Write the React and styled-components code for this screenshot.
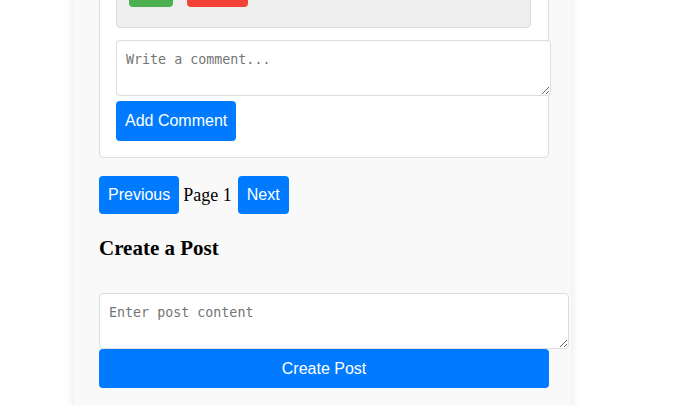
import React from 'react'
import styled, { createGlobalStyle } from 'styled-components'

const GlobalStyle = createGlobalStyle`
    body {
        margin: 0;
        background: #fff;
        font-family: "Liberation Serif", "Times New Roman", serif;
        overflow: hidden;
    }
`

function App() {
    return (
        <>
            <GlobalStyle />
            <Column>
                <PostCard>
                    <CommentBox>
                        <CommentText>Great post, thanks for sharing!</CommentText>
                        <Actions>
                            <SmallBtn color="#4caf50">Edit</SmallBtn>
                            <SmallBtn color="#f44336">Delete</SmallBtn>
                        </Actions>
                    </CommentBox>
                    <CommentInput placeholder="Write a comment..." />
                    <Button tall>Add Comment</Button>
                </PostCard>
                <Pager>
                    <Button>Previous</Button>
                    <PageLabel>Page 1</PageLabel>
                    <Button>Next</Button>
                </Pager>
                <Heading>Create a Post</Heading>
                <PostInput placeholder="Enter post content" />
                <WideButton>Create Post</WideButton>
            </Column>
        </>
    )
}

export default App

const Column = styled.div`
    margin: -75px 0 0 74px;
    width: 450px;
    padding: 0 22px 40px 25px;
    background: #f9f9f9;
    box-shadow: 0 0 10px rgba(0, 0, 0, 0.1);
    min-height: 520px;
`

const PostCard = styled.div`
    background: #fff;
    border: 1px solid #ddd;
    border-radius: 4px;
    padding: 16px;
`

const CommentBox = styled.div`
    background: #eee;
    border: 1px solid #ddd;
    border-radius: 4px;
    padding: 12px 12px 20px;
    margin-right: 1px;
`

const CommentText = styled.p`
    margin: 0 0 8px;
    font: 14px/18px "Liberation Sans", Arial, sans-serif;
`

const Actions = styled.div`
    display: flex;
    gap: 14px;
`

const SmallBtn = styled.button`
    height: 26px;
    padding: 0 10px;
    border: none;
    border-radius: 4px;
    background: ${p => p.color};
    color: #fff;
    font: 14px "Liberation Sans", Arial, sans-serif;
`

const CommentInput = styled.textarea`
    display: block;
    width: 100%;
    height: 38px;
    margin: 12px 0 5px;
    padding: 11px 8px 5px 9px;
    border: 1px solid #ddd;
    border-radius: 4px;
    font: 13.33px "DejaVu Sans Mono", monospace;
    resize: vertical;
    &::placeholder { color: #757575; }
`

const Button = styled.button`
    height: ${p => p.tall ? 40 : 38}px;
    padding: 0 9px;
    border: none;
    border-radius: 4px;
    background: #007bff;
    color: #fff;
    font: 16px "Liberation Sans", Arial, sans-serif;
`

const Pager = styled.div`
    display: flex;
    align-items: center;
    margin-top: 18px;
`

const PageLabel = styled.span`
    margin: 0 6px 0 4px;
    font-size: 18px;
    color: #000;
`

const Heading = styled.h3`
    margin: 22px 0 33px;
    font-size: 21px;
    font-weight: bold;
    line-height: 24px;
`

const PostInput = styled.textarea`
    display: block;
    width: 100%;
    height: 38px;
    margin: 0;
    padding: 11px 9px 5px;
    border: 1px solid #ddd;
    border-radius: 4px;
    font: 13.33px "DejaVu Sans Mono", monospace;
    resize: vertical;
    &::placeholder { color: #757575; }
`

const WideButton = styled.button`
    display: block;
    width: 100%;
    height: 39px;
    border: none;
    border-radius: 4px;
    background: #007bff;
    color: #fff;
    font: 16px "Liberation Sans", Arial, sans-serif;
`
